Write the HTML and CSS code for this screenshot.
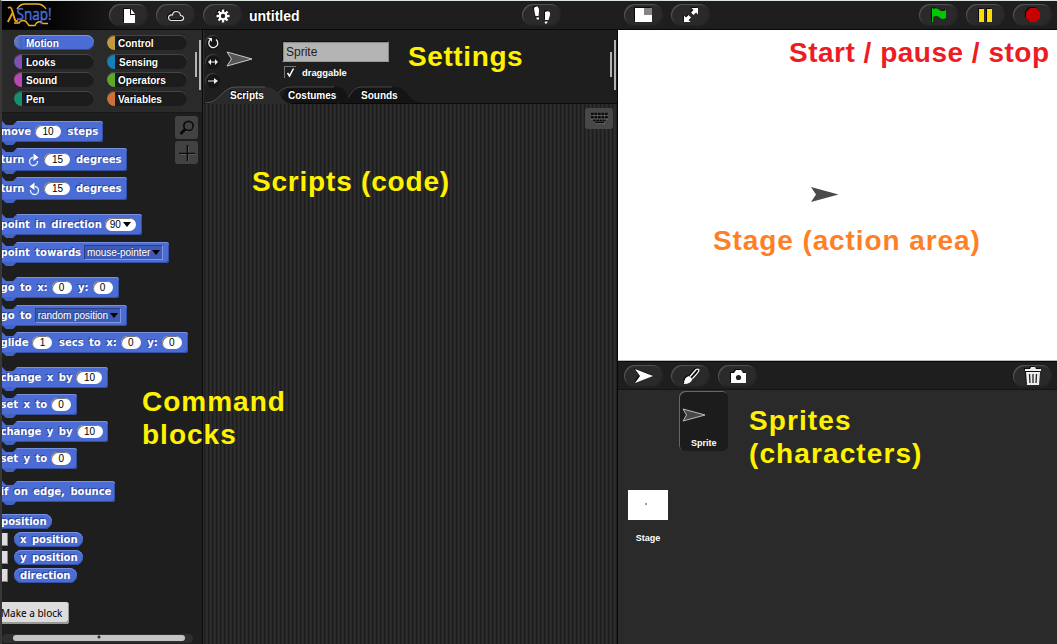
FILE: index.html
```html
<!DOCTYPE html>
<html lang="en">
<head>
<meta charset="utf-8">
<title>untitled</title>
<link rel="stylesheet" href="styles.css">
</head>
<body>
<div class="ide">
  <header class="topbar">
    <svg class="logo" width="50" height="28" viewBox="0 0 50 28">
      <path d="M10 8Q13 3 18 3H30Q36 3 39 8 M7 22H12Q14 18 19 20.500 L22 24.500H28Q30 20 34 21L36 22.500H41" fill="none" stroke="#eeb32a" stroke-width="1.400"/>
      <path d="M1 7 Q4 5 5 9 L8 19 Q9 21 11 19.500 M5.500 12 L.8 21" fill="none" stroke="#e8a21c" stroke-width="1.900"/>
      <text x="9.500" y="19" class="logo-text" textLength="35" lengthAdjust="spacingAndGlyphs">Snap!</text>
    </svg>
    <button class="pill file"><svg width="13" height="15" viewBox="0 0 13 15"><path d="M1 1H7V7H12V15H1Z M8 1 12 6H8Z" fill="#fff"/></svg></button>
    <button class="pill cloud"><svg width="18" height="12" viewBox="0 0 18 12"><path d="M4 10.500H14Q17 10 16.500 7.500Q16 5.500 13.500 5.500Q13 1.500 9 1.500Q6 1.500 5.500 5Q1.500 4.500 1.500 8Q1.700 10 4 10.500Z" fill="none" stroke="#e8e8e8" stroke-width="1.200"/></svg></button>
    <button class="pill gear"><svg width="14" height="14" viewBox="-7 -7 14 14"><g stroke="#fff" stroke-width="2.400"><path d="M0-6.500V6.500M-6.500 0H6.500M-4.500-4.500 4.500 4.500M4.500-4.500-4.500 4.500"/></g><circle r="4.300" fill="#fff"/><circle r="2.200" fill="#222"/></svg></button>
    <span class="project">untitled</span>
    <button class="pill steps"><svg width="18" height="18" viewBox="0 0 18 18" fill="#fff"><path d="M1 2Q2 0 4.500 .5Q6.500 3 6 5L5.500 10H2.500L1.500 6Z M3 11.500H6V13.500H4Z M12 6Q15 4.500 17 6.500V9L15.500 14H12V10Z M11.500 15.500H14.500L14 17.500H12Z"/></svg></button>
    <button class="pill size"><svg width="17" height="14" viewBox="0 0 17 14"><path d="M0 0H17V14H0Z" fill="#fff"/><path d="M9 0H17V7H9Z" fill="#858585"/></svg></button>
    <button class="pill"><svg width="16" height="16" viewBox="0 0 16 16"><path d="M8.500 1H15V7.500L13 5.500 10.500 8 8 5.500 10.500 3Z M1 8.500 3 10.500 5.500 8 8 10.500 5.500 13 7.500 15H1Z" fill="#fff"/></svg></button>
    <button class="pill flag"><svg width="16" height="16" viewBox="0 0 16 16"><path d="M1 1H2V15H1Z" fill="#00c800"/><path d="M2 2Q6 0 8.500 3Q11 5 15 3V11Q11 13 8.500 10.500Q6 8 2 10Z" fill="#00c800"/></svg></button>
    <button class="pill"><svg width="13" height="13" viewBox="0 0 13 13"><path d="M0 0H5V13H0ZM8 0H13V13H8Z" fill="#ffdc00"/></svg></button>
    <button class="pill"><svg width="14" height="14" viewBox="0 0 14 14"><path d="M4 0H10L14 4V10L10 14H4L0 10V4Z" fill="#c80000"/></svg></button>
  </header>

  <div class="main">
    <aside class="palette">
      <div class="categories">
        <div class="cat motion active">Motion</div><div class="cat control">Control</div>
        <div class="cat looks">Looks</div><div class="cat sensing">Sensing</div>
        <div class="cat sound">Sound</div><div class="cat operators">Operators</div>
        <div class="cat pen">Pen</div><div class="cat variables">Variables</div>
        <i class="grip grip-short"></i><i class="grip grip-tall"></i>
      </div>
      <div class="blocks">
        <div class="tools">
          <span class="tool"><svg width="18" height="18" viewBox="0 0 18 18" fill="none"><path d="M7.500 12Q13.500 13.500 16 8" stroke="#888"/><circle cx="10.500" cy="7" r="4.700" stroke="#0c0c0c" stroke-width="1.700"/><path d="M7 10.500 2.500 15" stroke="#0c0c0c" stroke-width="3"/></svg></span>
          <span class="tool"><svg width="18" height="18" viewBox="0 0 18 18"><path d="M10.500 2V17M2 10.500H17" stroke="#777"/><path d="M9.500 1V17M1 9.500H17" stroke="#0c0c0c" stroke-width="1.600"/></svg></span>
        </div>
        <div class="block w-move">move <b class="num n2">10</b> steps</div>
        <div class="block w-turn turn">turn <svg class="arc" width="12" height="14" viewBox="0 0 12 14"><path d="M5 4.500A4 4 0 1 0 9.500 8" fill="none" stroke="#e9eefc" stroke-width="1.400"/><path d="M5.500 .5 10.500 4.500 5.500 8Z" fill="#fff"/></svg> <b class="num n2">15</b> degrees</div>
        <div class="block w-turn turn">turn <svg class="arc" width="12" height="14" viewBox="0 0 12 14"><path d="M7 4.500A4 4 0 1 1 2.500 8" fill="none" stroke="#e9eefc" stroke-width="1.400"/><path d="M6.500 .5 1.500 4.500 6.500 8Z" fill="#fff"/></svg> <b class="num n2">15</b> degrees</div>
        <div class="block w-dir group">point in direction <b class="num drop">90<i class="caret"></i></b></div>
        <div class="block w-towards">point towards <b class="menu m-mouse">mouse-pointer<i class="caret"></i></b></div>
        <div class="block w-goto group">go to x: <b class="num n1">0</b> y: <b class="num n1">0</b></div>
        <div class="block w-random">go to <b class="menu m-random">random position<i class="caret"></i></b></div>
        <div class="block w-glide">glide <b class="num n1">1</b> secs to x: <b class="num n1">0</b> y: <b class="num n1">0</b></div>
        <div class="block w-change group">change x by <b class="num n2">10</b></div>
        <div class="block w-set">set x to <b class="num n1">0</b></div>
        <div class="block w-change">change y by <b class="num n2">10</b></div>
        <div class="block w-set">set y to <b class="num n1">0</b></div>
        <div class="block w-bounce">if on edge, bounce</div>
        <div class="reporter cut">position</div>
        <div class="row"><i class="check"></i><span class="reporter r-pos">x position</span></div>
        <div class="row"><i class="check"></i><span class="reporter r-pos">y position</span></div>
        <div class="row"><i class="check"></i><span class="reporter r-dir">direction</span></div>
        <button class="make">Make a block</button>
        <div class="hscroll"><span></span></div>
      </div>
    </aside>

    <section class="editor">
      <div class="settings">
        <div class="rotation">
          <span><svg width="12" height="12" viewBox="0 0 12 12"><path d="M3 3A4.500 4.500 0 1 0 9 2.500" fill="none" stroke="#eee" stroke-width="1.300"/><path d="M1 1H5V5Z" fill="#eee"/></svg></span>
          <span><svg width="10" height="6" viewBox="0 0 10 6"><path d="M0 3 3 0V2.400H7V0L10 3 7 6V3.600H3V6Z" fill="#eee"/></svg></span>
          <span><svg width="10" height="6" viewBox="0 0 10 6"><path d="M0 2.400H6V0L10 3 6 6V3.600H0Z" fill="#eee"/></svg></span>
        </div>
        <svg class="arrow" width="27" height="16" viewBox="0 0 27 16"><path d="M1 1 26 8 1 15 5.500 8Z" fill="#555" stroke="#c8c8c8"/></svg>
        <div class="identity">
          <div class="name">Sprite</div>
          <div class="drag"><span class="tick"><svg width="11" height="11" viewBox="0 0 11 11"><path d="M2.500 6 4.500 9 8.500 1.500" fill="none" stroke="#fff" stroke-width="1.500"/></svg></span>draggable</div>
        </div>
        <i class="grip grip-short"></i><i class="grip grip-tall"></i>
      </div>
      <div class="tabs">
        <svg class="tab-shapes" width="413" height="18" viewBox="0 0 413 18"><path d="M130 17C148 17 142 1 158 1H190C206 1 203 17 220 17Z" fill="#141414"/><path d="M133 17C148 17 144 1 158 1H188" fill="none" stroke="#444"/><path d="M66 17C84 17 75 1 89 1H132C147 1 139 17 155 17Z" fill="#141414"/><path d="M73 9Q77 1 87 1H130" fill="none" stroke="#444"/><path d="M0 18C18 18 16 1 32 1H61C78 1 74 18 90 18Z" fill="#2b2b2b"/><path d="M1 17C17 17 17 1 32 1H61" fill="none" stroke="#555"/></svg>
        <span class="tab t-scripts">Scripts</span><span class="tab t-costumes">Costumes</span><span class="tab">Sounds</span>
      </div>
      <div class="scripts"><span class="keyboard"><svg width="19" height="13" viewBox="0 0 19 13"><path d="M1 3.800H18M1 7H18M5 11.500H15" stroke="#888" stroke-width=".8"/><path d="M1 2H18M1 5.300H18" stroke="#0c0c0c" stroke-width="2.500" stroke-dasharray="2.700 .8"/><path d="M3 8.300H16" stroke="#0c0c0c" stroke-width="1.600" stroke-dasharray="2.700 .6"/><path d="M5 10.500H14" stroke="#0c0c0c" stroke-width="1.600"/></svg></span></div>
    </section>

    <section class="right">
      <div class="stage"><svg class="turtle" width="30" height="17" viewBox="0 0 30 17"><path d="M1 1 28.500 8.500 1 16 6 8.500Z" fill="#4a4a4a"/></svg></div>
      <div class="corral-bar">
        <button class="pill"><svg width="18" height="14" viewBox="0 0 18 14"><path d="M0 0 18 7 0 14 5 7Z" fill="#fff"/></svg></button>
        <button class="pill"><svg width="17" height="17" viewBox="0 0 17 17"><path d="M7 8.500 13 1.500Q15 .5 16 2Q16 4 9.500 10.500" fill="none" stroke="#fff" stroke-width="1.200"/><path d="M1 16Q1 9 6 8L9.500 11Q8 16 1 16Z" fill="#fff"/></svg></button>
        <button class="pill"><svg width="15" height="13" viewBox="0 0 15 13"><path d="M0 3H3L5 0H10L12 3H15V13H0Z" fill="#fff"/><circle cx="7.500" cy="7.500" r="2.600" fill="#222"/></svg></button>
        <button class="pill trash"><svg width="16" height="18" viewBox="0 0 16 18"><path d="M0 2H5L6 0H10L11 2H16V4H0Z M1 5H15L14 18H2Z" fill="#eee"/><path d="M4.500 7 5 16M8 7V16M11.500 7 11 16" stroke="#222" stroke-width="1.300"/></svg></button>
      </div>
      <div class="corral">
        <div class="stage-icon"><div class="thumb"></div><span>Stage</span></div>
        <div class="sprite-icon"><svg width="25" height="14" viewBox="0 0 25 14"><path d="M1 1 23 7 1 13 4.500 7Z" fill="#484848" stroke="#bbb"/></svg><span>Sprite</span></div>
      </div>
    </section>
  </div>

  <div class="note n-settings">Settings</div>
  <div class="note n-scripts">Scripts (code)</div>
  <div class="note n-command">Command<br>blocks</div>
  <div class="note n-start">Start / pause / stop</div>
  <div class="note n-stage">Stage (action area)</div>
  <div class="note n-sprites">Sprites<br>(characters)</div>
</div>
</body>
</html>
```
FILE: styles.css
```css
* { box-sizing: border-box; }
body { margin: 0; background: #1e1e1e; font-family: "Liberation Sans", Arial, sans-serif; color: #fff; }
button { font: inherit; border: 0; padding: 0; }
svg { display: block; flex: none; }
.ide { position: relative; width: 1057px; height: 644px; border-top: 1px solid #dde5e2; border-left: 2px solid #383838; overflow: hidden; display: flex; flex-direction: column; }

.topbar { height: 29px; flex: none; display: flex; align-items: flex-start; padding-top: 3px; gap: 8px; border-bottom: 1px solid #080808; background: linear-gradient(90deg, #000 0, #050505 50px, #1e1e1e 130px); }
.logo { margin: -3px 2px 0 5px; width: 50px; }
.logo-text { font: 17px "Open Sans", sans-serif; fill: #4a6cd4; stroke: #4a6cd4; stroke-width: .5; }
.pill { width: 39px; height: 22px; flex: none; border-radius: 11px; background: #2a2a2a; display: flex; align-items: center; justify-content: center; box-shadow: inset 1px 1px 1px #555, inset -1px -1px 1px #242424; }
.pill svg { filter: drop-shadow(-1px -1px 0 #0a0a0a); }
.file { margin-left: 42px; }
.file svg, .cloud svg, .topbar .gear svg { margin: 1px 0 0 1px; }
.project { width: 265px; margin-left: -1px; font-weight: bold; font-size: 14px; line-height: 24px; text-shadow: -1px -1px #000; }
.size { margin-left: 55px; }
.flag { margin-left: 201px; }
.main { display: flex; flex: 1; min-height: 0; }

.palette { width: 201px; flex: none; border-right: 1px solid #080808; display: flex; flex-direction: column; }
.categories { position: relative; height: 83px; flex: none; display: grid; grid-template-columns: 80px 80px; grid-auto-rows: 15px; gap: 3.700px 13px; padding: 5px 0 0 12px; background: #2a2a2a; border-bottom: 1px solid #181818; }
.cat { --c: #4a6cd4; border-radius: 8px; overflow: hidden; font-weight: bold; font-size: 10px; line-height: 17px; padding-left: 12px; background: linear-gradient(90deg, var(--c) 8px, #1c1c1c 8px); box-shadow: inset 0 1px #444; text-shadow: -1px -1px #000; }
.cat.active { background: linear-gradient(90deg, #6c82c8, #4562b8 8px, #4a6cd4 8px); box-shadow: inset 0 1px #7792ea, inset 0 -1px #2e4794; text-shadow: -1px -1px #273d82; }
.control { --c: #c49a3c; padding-left: 11px; } .looks { --c: #8050b4; } .sensing { --c: #1482b8; padding-left: 12px; }
.sound { --c: #b848b4; } .operators { --c: #60a62a; padding-left: 11px; } .pen { --c: #149070; } .variables { --c: #d07036; padding-left: 11px; }
.grip { position: absolute; width: 2px; background: #b4b4b4; }
.grip-short { right: 5px; top: 22px; height: 25px; }
.grip-tall { right: 1px; top: 10px; height: 50px; }

.blocks { position: relative; flex: 1; padding-top: 8px; display: flex; flex-direction: column; align-items: flex-start; background: #1e1e1e; overflow: hidden; font: bold 10px "DejaVu Sans", sans-serif; }
.tools { position: absolute; left: 173px; top: 3px; display: grid; gap: 2px; }
.tool { width: 23px; height: 23px; border-radius: 3px; background: #424242; display: grid; place-items: center; }
.block { position: relative; height: 21px; flex: none; margin-bottom: 6px; display: flex; align-items: center; gap: 5px; white-space: nowrap; word-spacing: 2px; text-indent: -1.500px; color: #fff; background: #4a6cd4; border-radius: 0 3px 3px 0; box-shadow: inset 0 1px #7890e0, inset -1px -1px #3450a4; text-shadow: -1px -1px #2b428b; }
.block::before { content: ""; position: absolute; left: 0; top: 0; width: 15px; height: 4px; background: #1e1e1e; clip-path: polygon(0 0, 4px 4px, 11px 4px, 15px 0); }
.block::after { content: ""; position: absolute; left: 0; bottom: -3px; width: 15px; height: 4px; background: #4262c4; clip-path: polygon(0 0, 15px 0, 11px 4px, 4px 4px); }
.block.turn { height: 23px; }
.block.group { margin-top: 8px; }
.w-move { width: 101px; } .w-turn { width: 125px; } .w-dir { width: 140px; }
.block.w-dir { margin-bottom: 7px; }
.w-towards { width: 167px; }
.w-goto { width: 117px; }
.block.w-random { width: 125px; margin: 1px 0 6px; }
.w-glide { width: 186px; } .w-change { width: 106px; }
.w-set { width: 75px; }
.block.w-bounce { width: 113px; margin-top: 6px; }
.num { height: 13px; border-radius: 7px; margin: 0 3px 0 -1px; background: #fff; color: #000; font: 10px/14px "Liberation Sans", sans-serif; text-indent: 0; text-shadow: none; text-align: center; box-shadow: inset 1px 1px #777; flex: none; }
.arc { margin-left: -1px; }
.turn .num { margin-right: 2px; }
.n1 { width: 20px; } .n2 { width: 26px; }
.drop { width: 31px; margin-left: -2px; display: flex; align-items: center; justify-content: center; gap: 2px; }
.caret { border: 4px solid transparent; border-top: 5px solid #000; border-bottom: 0; }
.menu { height: 15px; margin-left: -2px; display: flex; align-items: center; justify-content: space-between; padding: 0 2px; font: 10px "Liberation Sans", sans-serif; letter-spacing: -.05px; text-indent: 0; word-spacing: 0; background: #3d5bb5; border: 1px solid #2b4187; border-right-color: #8298de; border-bottom-color: #8298de; }
.m-mouse { width: 79px; } .m-random { width: 86px; }
.reporter { height: 15px; border-radius: 8px; padding: 0 7px 0 6px; line-height: 15px; word-spacing: 2px; background: #4a6cd4; box-shadow: inset 0 1px #7890e0, inset 0 -1px #3450a4; text-shadow: -1px -1px #2b428b; white-space: nowrap; }
.cut { width: 50px; padding: 0; text-indent: -1px; border-radius: 0 8px 8px 0; margin: 6px 0 3px; }
.row { display: flex; height: 15px; margin-bottom: 3px; align-items: center; gap: 6px; }
.check { width: 6px; height: 13px; background: #ddd; border-right: 1px solid #888; border-bottom: 1px solid #888; }
.r-pos { width: 69px; } .r-dir { width: 63px; }
.make { width: 67px; height: 22px; margin-top: 16px; text-indent: -1px; text-align: left; white-space: nowrap; font: 10px "Noto Sans", sans-serif; border-radius: 0 3px 3px 0; background: #ddd; color: #000; box-shadow: inset -1px -2px #999; }
.hscroll { width: 191px; height: 9px; margin-top: 10px; background: #2e2e2e; border-radius: 5px; padding: 1px 8px 0 11px; }
.hscroll span { display: block; height: 6px; border-radius: 3px; background: radial-gradient(circle at 86px 2px, #333 1px, #c4c4c4 2px); }

.editor { width: 415px; flex: none; border-left: 1px solid #2d2d2d; border-right: 1px solid #080808; display: flex; flex-direction: column; }
.settings { position: relative; height: 57px; display: flex; flex: none; }
.rotation { width: 15px; margin: 5px 0 0 1px; display: grid; gap: 4px; grid-auto-rows: 15px; }
.rotation span { border-radius: 50%; background: #151515; display: grid; place-items: center; box-shadow: inset 1px 1px #444; }
.arrow { margin: 21px 0 0 6px; }
.identity { margin: 11px 0 0 29px; width: 107px; }
.name { height: 21px; background: #b4b4b4; border: 1px solid #111; border-right-color: #888; border-bottom-color: #999; color: #222; font-size: 12px; line-height: 20px; padding-left: 3px; box-shadow: inset 1px 1px 1px #888; }
.drag { display: flex; align-items: center; gap: 6px; margin: 4px 0 0 2px; font-size: 9.400px; font-weight: bold; }
.tick { width: 12px; height: 12px; border-top: 1px solid #777; border-left: 1px solid #777; }
.tabs { position: relative; height: 17px; flex: none; display: flex; padding-left: 26px; font-size: 10px; font-weight: bold; line-height: 18px; border-bottom: 1px solid #090909; }
.tab-shapes { position: absolute; left: 0; top: -1px; }
.tab { position: relative; text-shadow: -1px -1px #000; }
.t-scripts { width: 58px; } .t-costumes { width: 73px; }
.scripts { flex: 1; display: flex; justify-content: flex-end; align-items: flex-start; padding: 4px 4px 0; background: repeating-linear-gradient(90deg, #1e1e1e 0 1px, #252525 1px 2px, #2e2e2e 2px 3px, #292929 3px 4px); }
.keyboard { width: 28px; height: 21px; border-radius: 3px; background: #484848; display: grid; place-items: center; }

.right { flex: 1; display: flex; flex-direction: column; background: #2a2a2a; }
.stage { height: 331px; flex: none; background: #fff; padding: 156px 0 0 192px; border-bottom: 1px solid #bbb; }
.corral-bar { height: 29px; flex: none; display: flex; gap: 8px; padding: 3px 5px 0 6px; background: #1e1e1e; border-top: 1px solid #080808; border-bottom: 1px solid #141414; }
.corral-bar svg { margin-left: 1px; }
.trash { margin-left: auto; }
.corral { display: flex; font-size: 9px; font-weight: bold; }
.stage-icon { width: 40px; margin: 100px 0 0 10px; text-align: center; }
.thumb { height: 30px; background: radial-gradient(circle at 18px 14px, #777 .6px, #fff 1px); margin-bottom: 13px; }
.sprite-icon { width: 49px; height: 60px; margin-left: 11px; margin-top: 1px; border-radius: 6px; background: #1c1c1c; box-shadow: inset 1px 1px #666; padding: 17px 0 0 3px; }
.sprite-icon span { display: block; margin: 16px 0 0 9px; }

.note { position: absolute; white-space: nowrap; font-size: 28px; font-weight: bold; line-height: 33px; color: #fff200; }
.n-settings { left: 406px; top: 39px; letter-spacing: .6px; }
.n-scripts { left: 250px; top: 164px; letter-spacing: .8px; }
.n-command { left: 140px; top: 384px; letter-spacing: 1px; }
.n-start { left: 787px; top: 35px; letter-spacing: .5px; color: #ed1c24; }
.n-stage { left: 711px; top: 223px; letter-spacing: .9px; color: #ff7f27; }
.n-sprites { left: 747px; top: 403px; letter-spacing: 1.100px; }
```
